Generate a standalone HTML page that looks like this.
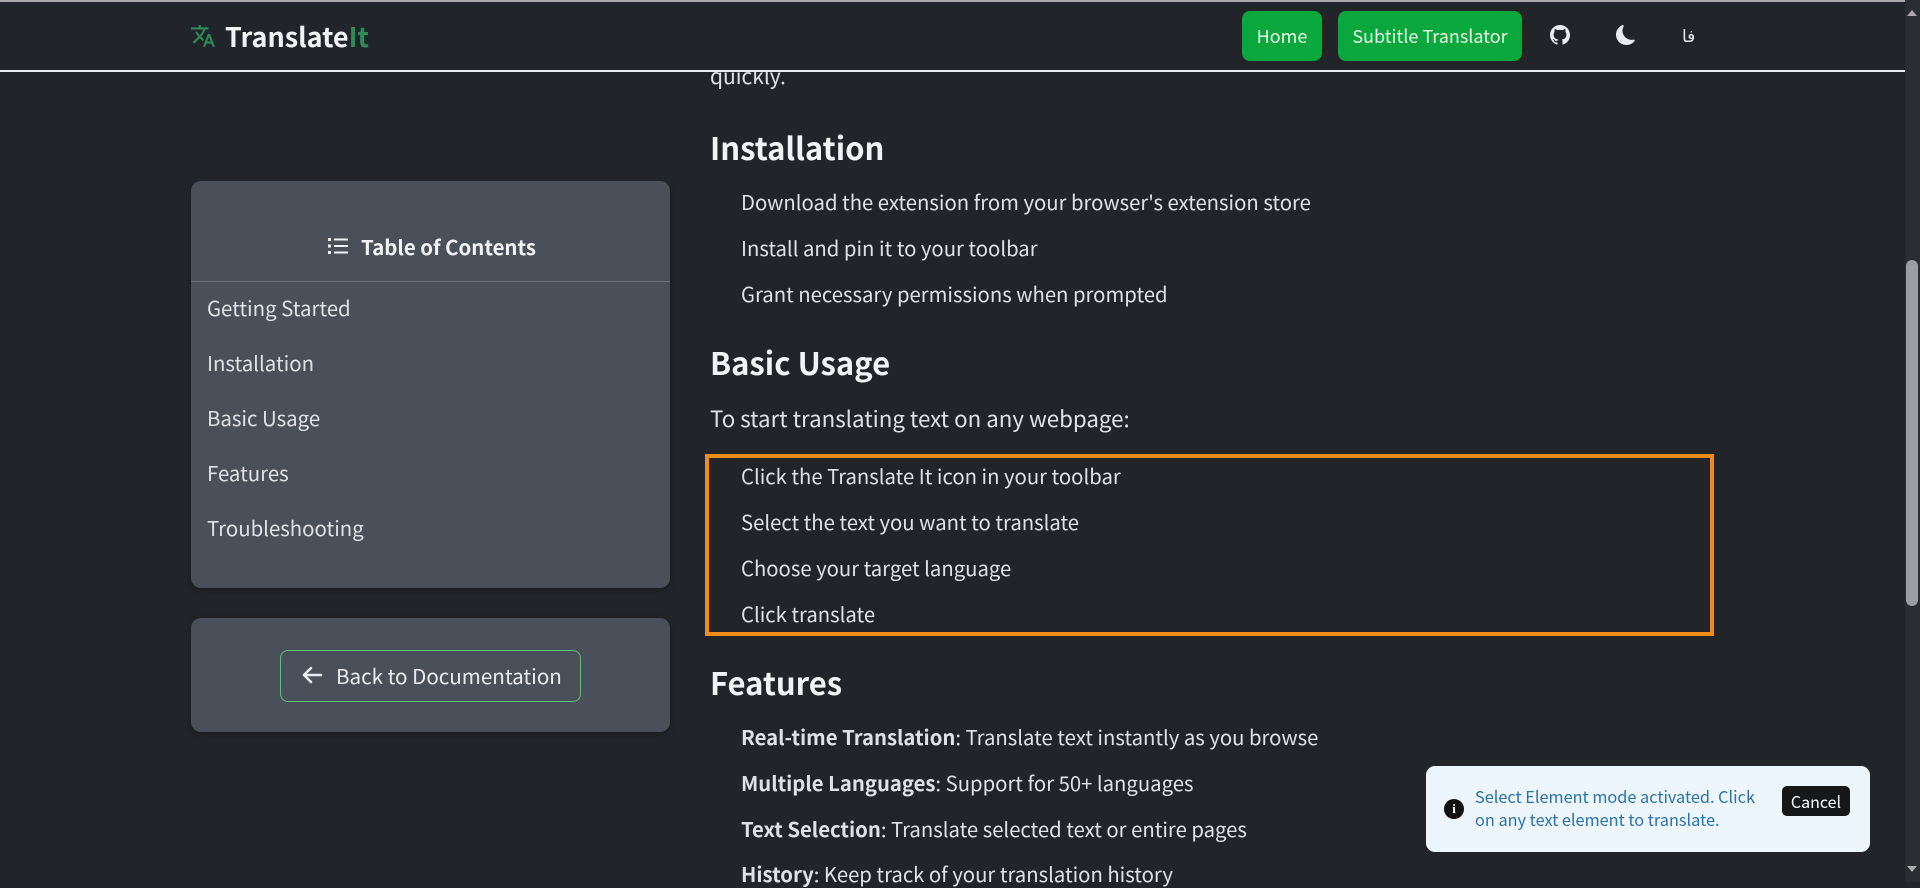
<!DOCTYPE html>
<html><head><meta charset="utf-8">
<style>
*{margin:0;padding:0;box-sizing:border-box}
html,body{width:1920px;height:882px;overflow:hidden;background:#212429;color:#dee2e6;font-family:"Noto Sans CJK SC","Liberation Sans",sans-serif}
.a{position:absolute;white-space:nowrap}
.hdr{position:absolute;left:0;top:0;width:1905px;height:72px;background:#212429;border-top:2px solid #aaa;border-bottom:2px solid #e9ecef}
.btn{position:absolute;top:11px;height:50px;background:#0aa83c;border-radius:8px;color:#e9fbe9;font-size:18px;line-height:50px;text-align:center}
.card{position:absolute;left:191px;width:479px;background:#4a5059;border-radius:10px;box-shadow:0 2px 6px rgba(0,0,0,.3)}
.toc{font-size:20.4px;line-height:28px;left:207px}
.li{font-size:20.3px;line-height:28px;left:741px}
.h2{font-size:31px;font-weight:bold;line-height:40px;left:710px;color:#f1f3f5}
</style></head><body>
<div class="a" style="left:1905px;top:0;width:15px;height:882px;background:#2a2d31"></div>
<div class="a" style="left:1906px;top:260px;width:12px;height:346px;background:#9a9da1;border-radius:6px"></div>
<div class="a" style="left:1907px;top:10px;width:0;height:0;border-left:5px solid transparent;border-right:5px solid transparent;border-bottom:6px solid #aaa"></div>
<div class="a" style="left:1907px;top:866px;width:0;height:0;border-left:5px solid transparent;border-right:5px solid transparent;border-top:6px solid #aaa"></div>

<div class="card" style="top:181px;height:407px"></div>
<div class="a" style="left:191px;top:281px;width:479px;height:1px;background:#6c737c"></div>
<svg class="a" style="left:328px;top:237px" width="20" height="18" viewBox="0 0 20 18" fill="#f1f3f5"><rect x="0" y="1" width="3" height="3"/><rect x="0" y="7.5" width="3" height="3"/><rect x="0" y="14" width="3" height="3"/><rect x="6" y="1.5" width="14" height="2"/><rect x="6" y="8" width="14" height="2"/><rect x="6" y="14.5" width="14" height="2"/></svg>
<div class="a" style="left:361px;top:232px;font-size:20.4px;font-weight:bold;line-height:28px;color:#f1f3f5">Table of Contents</div>
<div class="a toc" style="top:293px">Getting Started</div>
<div class="a toc" style="top:348px">Installation</div>
<div class="a toc" style="top:403px">Basic Usage</div>
<div class="a toc" style="top:458px">Features</div>
<div class="a toc" style="top:513px">Troubleshooting</div>

<div class="card" style="top:618px;height:114px"></div>
<div class="a" style="left:280px;top:650px;width:301px;height:52px;border:1px solid #5fbf7d;border-radius:8px"></div>
<svg class="a" style="left:301px;top:665px" width="22" height="20" viewBox="0 0 22 20" fill="none" stroke="#e9ecef" stroke-width="2.6" stroke-linecap="round" stroke-linejoin="round"><path d="M20 10H3M10 3L3 10l7 7"/></svg>
<div class="a" style="left:336px;top:661px;font-size:20.6px;line-height:28px;color:#e9ecef">Back to Documentation</div>

<div class="a" style="left:710px;top:62px;font-size:21px;line-height:28px">quickly.</div>
<div class="hdr"></div>
<svg class="a" style="left:190px;top:23px" width="26" height="26" viewBox="0 0 24 24" fill="#2e8b57"><path d="M12.87 15.07l-2.54-2.51.03-.03c1.74-1.94 2.98-4.17 3.71-6.53H17V4h-7V2H8v2H1v1.99h11.17C11.5 7.920 10.44 9.75 9 11.35 8.07 10.32 7.3 9.19 6.69 8h-2c.73 1.63 1.73 3.17 2.98 4.56l-5.09 5.02L4 19l5-5 3.11 3.11.76-2.04zM18.5 10h-2L12 22h2l1.12-3h4.75L21 22h2l-4.5-12zm-2.62 7l1.62-4.33L19.12 17h-3.24z"/></svg>
<div class="a" style="left:225px;top:16px;font-size:27px;font-weight:bold;line-height:40px;color:#f1f3f5">Translate<span style="color:#2e8b57">It</span></div>
<div class="btn" style="left:1242px;width:80px">Home</div>
<div class="btn" style="left:1338px;width:184px">Subtitle Translator</div>
<svg class="a" style="left:1550px;top:25px" width="20" height="20" viewBox="0 0 16 16" fill="#e9ecef"><path d="M8 0C3.58 0 0 3.58 0 8c0 3.54 2.29 6.53 5.47 7.59.4.07.55-.17.55-.38v-1.33c-2.23.48-2.7-1.07-2.7-1.07-.36-.92-.89-1.170-.89-1.17-.73-.5.05-.49.05-.49.8.06 1.23.83 1.23.83.72 1.23 1.87.87 2.33.66.07-.52.28-.87.5-1.07-1.78-.2-3.64-.89-3.64-3.95 0-.87.31-1.59.82-2.15-.08-.2-.36-1.02.08-2.12 0 0 .67-.21 2.2.82a7.6 7.6 0 014 0c1.53-1.04 2.2-.82 2.2-.82.44 1.1.16 1.92.08 2.12.51.56.82 1.27.82 2.15 0 3.07-1.87 3.75-3.65 3.95.29.25.54.73.54 1.48v2.2c0 .21.15.46.55.38A8 8 0 0016 8c0-4.42-3.58-8-8-8z"/></svg>
<svg class="a" style="left:1616px;top:25px" width="20" height="20" viewBox="0 0 16 16" fill="#e9ecef"><path d="M6 .278a.77.77 0 0 1 .08.858 7.2 7.2 0 0 0-.878 3.46c0 4.021 3.278 7.277 7.318 7.277q.792-.001 1.533-.16a.79.79 0 0 1 .81.316.73.73 0 0 1-.031.893A8.35 8.35 0 0 1 8.344 16C3.734 16 0 12.286 0 7.71 0 4.266 2.114 1.312 5.124.06A.75.75 0 0 1 6 .278"/></svg>
<div class="a" style="left:1682px;top:22px;font-size:17px;line-height:26px;color:#e9ecef">فا</div>

<div class="a h2" style="top:127px">Installation</div>
<div class="a li" style="top:187px">Download the extension from your browser's extension store</div>
<div class="a li" style="top:233px">Install and pin it to your toolbar</div>
<div class="a li" style="top:279px">Grant necessary permissions when prompted</div>
<div class="a h2" style="top:342px">Basic Usage</div>
<div class="a" style="left:710px;top:403px;font-size:22.3px;line-height:30px">To start translating text on any webpage:</div>
<div class="a" style="left:705px;top:454px;width:1009px;height:182px;border:4px solid #f08c1a"></div>
<div class="a li" style="top:461px">Click the Translate It icon in your toolbar</div>
<div class="a li" style="top:507px">Select the text you want to translate</div>
<div class="a li" style="top:553px">Choose your target language</div>
<div class="a li" style="top:599px">Click translate</div>
<div class="a h2" style="top:662px">Features</div>
<div class="a li" style="top:722px"><b>Real-time Translation</b>: Translate text instantly as you browse</div>
<div class="a li" style="top:768px"><b>Multiple Languages</b>: Support for 50+ languages</div>
<div class="a li" style="top:814px"><b>Text Selection</b>: Translate selected text or entire pages</div>
<div class="a li" style="top:859px"><b>History</b>: Keep track of your translation history</div>

<div class="a" style="left:1426px;top:766px;width:444px;height:86px;background:#eef6fd;border-radius:9px"></div>
<div class="a" style="left:1444px;top:799px;width:20px;height:20px;border-radius:50%;background:#111;color:#fff;font-size:13px;font-weight:bold;line-height:20px;text-align:center;font-family:'Liberation Serif',serif">i</div>
<div class="a" style="left:1475px;top:785px;font-size:16.3px;line-height:23px;color:#2a73ad">Select Element mode activated. Click<br>on any text element to translate.</div>
<div class="a" style="left:1782px;top:786px;width:68px;height:30px;background:#161719;border-radius:5px;color:#fff;font-size:16px;line-height:30px;text-align:center">Cancel</div>
</body></html>
